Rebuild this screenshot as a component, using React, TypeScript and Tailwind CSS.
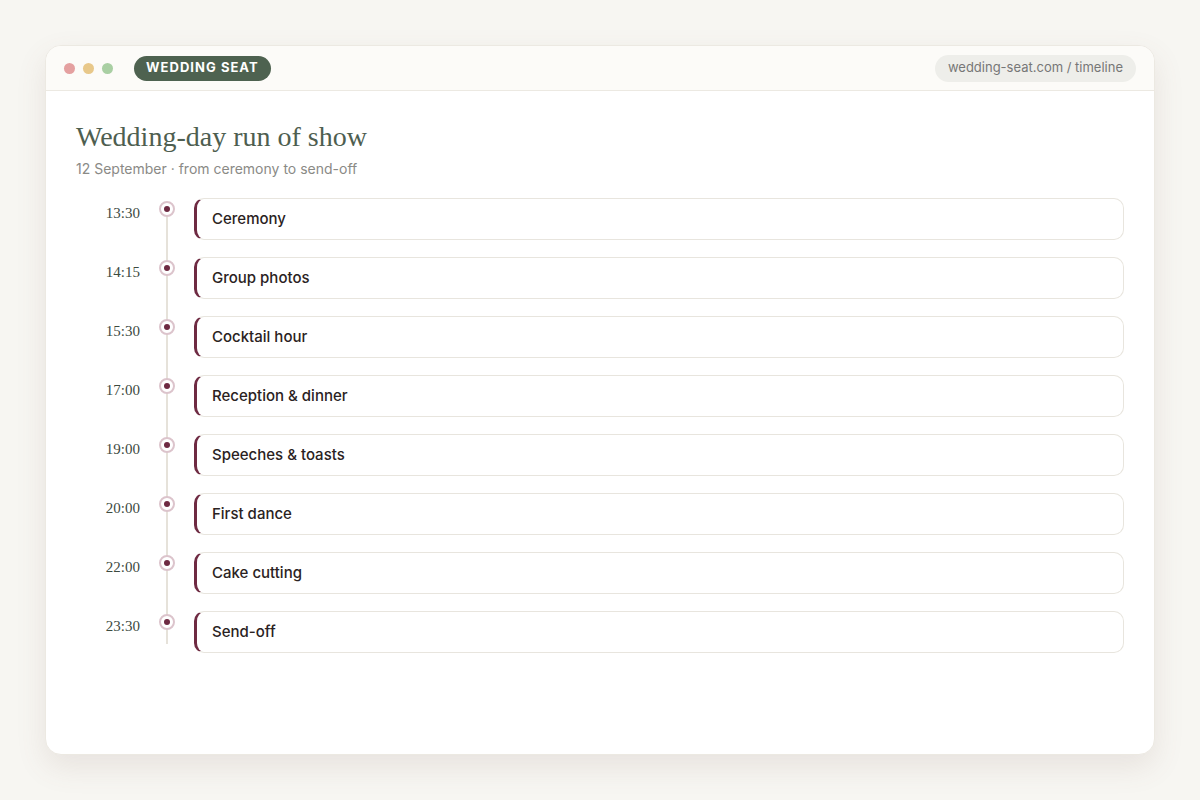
export default function App() {
  const items: [string, string][] = [
    ["13:30", "Ceremony"],
    ["14:15", "Group photos"],
    ["15:30", "Cocktail hour"],
    ["17:00", "Reception & dinner"],
    ["19:00", "Speeches & toasts"],
    ["20:00", "First dance"],
    ["22:00", "Cake cutting"],
    ["23:30", "Send-off"],
  ];
  const serif = { fontFamily: '"Liberation Serif", serif' };
  return (
    <div className="w-[1200px] h-[800px] bg-[#f7f6f2] pt-[45px] px-[45px]" style={{ fontFamily: 'Inter, sans-serif' }}>
      <div className="h-[710px] bg-white rounded-[16px] border border-[#ece9e2] shadow-[0_12px_30px_rgba(120,90,80,0.12)] overflow-hidden flex flex-col">
        <div className="h-[45px] bg-[#fcfbf8] border-b border-[#ece9e2] flex items-center pl-[18px] pr-[18px]">
          <div className="flex gap-[8px]">
            <span className="w-[11px] h-[11px] rounded-full bg-[#e4a0a0]" />
            <span className="w-[11px] h-[11px] rounded-full bg-[#e8c88a]" />
            <span className="w-[11px] h-[11px] rounded-full bg-[#a9cfa3]" />
          </div>
          <div className="ml-[21px] h-[25px] px-[12px] rounded-full bg-[#4e6250] text-white text-[13px] font-bold tracking-[0.08em] flex items-center">WEDDING SEAT</div>
          <div className="ml-auto h-[27px] px-[13px] rounded-full bg-[#eeeeea] text-[#777] text-[13px] flex items-center">wedding-seat.com / timeline</div>
        </div>
        <div className="pl-[30px] pr-[30px] pt-[28px]">
          <h1 className="text-[28px] text-[#4e5e50] leading-[36px]" style={serif}>Wedding-day run of show</h1>
          <p className="text-[14px] text-[#8a8a86] mt-[3px]">12 September · from ceremony to send-off</p>
          <div className="relative mt-[19px]">
            <div className="absolute left-[90px] top-[10px] h-[436px] w-[2px] bg-[#e6e2da]" />
            <div className="flex flex-col gap-[17px]">
              {items.map(([t, n]) => (
                <div key={t} className="flex items-start">
                  <div className="w-[64px] text-right text-[15px] text-[#3d4a3f] pt-[4px]" style={serif}>{t}</div>
                  <div className="w-[54px] flex justify-center pt-[3px] relative z-10">
                    <span className="w-[16px] h-[16px] rounded-full bg-white border-2 border-[#dcc4cc] flex items-center justify-center">
                      <span className="w-[6px] h-[6px] rounded-full bg-[#6e2a42]" />
                    </span>
                  </div>
                  <div className="flex-1 h-[42px] rounded-[10px] border border-[#e8e5de] border-l-[3px] border-l-[#6e2a42] flex items-center pl-[15px] text-[15px] font-medium text-[#2a2222]">{n}</div>
                </div>
              ))}
            </div>
          </div>
        </div>
      </div>
    </div>
  );
}
